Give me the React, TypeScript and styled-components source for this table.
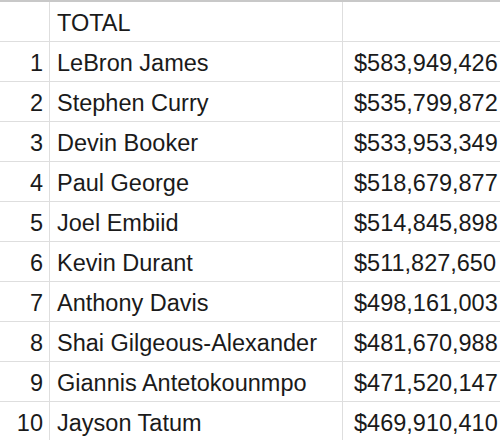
import React from 'react';
import styled, { createGlobalStyle } from 'styled-components';

const GlobalStyle = createGlobalStyle`
  body {
    margin: 0;
    background: #fff;
    font-family: "Liberation Sans", Arial, sans-serif;
  }
`;

const StyledSheet = styled.div`
  display: grid;
  grid-template-columns: 50px 293px 1fr;
  border-top: 2px solid #c8c8c8;
  width: 500px;
  height: 440px;
  overflow: hidden;
  color: #1a1a1a;
  font-size: 23.5px;
`;

interface CellProps {
  kind: 'index' | 'name' | 'money';
}

const StyledCell = styled.div<CellProps>`
  box-sizing: border-box;
  height: 40px;
  display: flex;
  align-items: center;
  white-space: nowrap;
  overflow: hidden;
  border-bottom: 1px solid #dedede;
  border-right: ${props => (props.kind === 'money' ? 'none' : '1px solid #dedede')};
  justify-content: ${props => (props.kind === 'index' ? 'flex-end' : 'flex-start')};
  padding: ${props =>
    props.kind === 'index' ? '4px 6px 0 0' : props.kind === 'name' ? '4px 0 0 7px' : '4px 0 0 11px'};
`;

const players: [string, string][] = [
  ['LeBron James', '$583,949,426'],
  ['Stephen Curry', '$535,799,872'],
  ['Devin Booker', '$533,953,349'],
  ['Paul George', '$518,679,877'],
  ['Joel Embiid', '$514,845,898'],
  ['Kevin Durant', '$511,827,650'],
  ['Anthony Davis', '$498,161,003'],
  ['Shai Gilgeous-Alexander', '$481,670,988'],
  ['Giannis Antetokounmpo', '$471,520,147'],
  ['Jayson Tatum', '$469,910,410'],
];

export default function App() {
  return (
    <>
      <GlobalStyle />
      <StyledSheet>
        <StyledCell kind="index" />
        <StyledCell kind="name">TOTAL</StyledCell>
        <StyledCell kind="money" />
        {players.map(([name, salary], i) => (
          <React.Fragment key={name}>
            <StyledCell kind="index">{i + 1}</StyledCell>
            <StyledCell kind="name">{name}</StyledCell>
            <StyledCell kind="money">{salary}</StyledCell>
          </React.Fragment>
        ))}
      </StyledSheet>
    </>
  );
}
